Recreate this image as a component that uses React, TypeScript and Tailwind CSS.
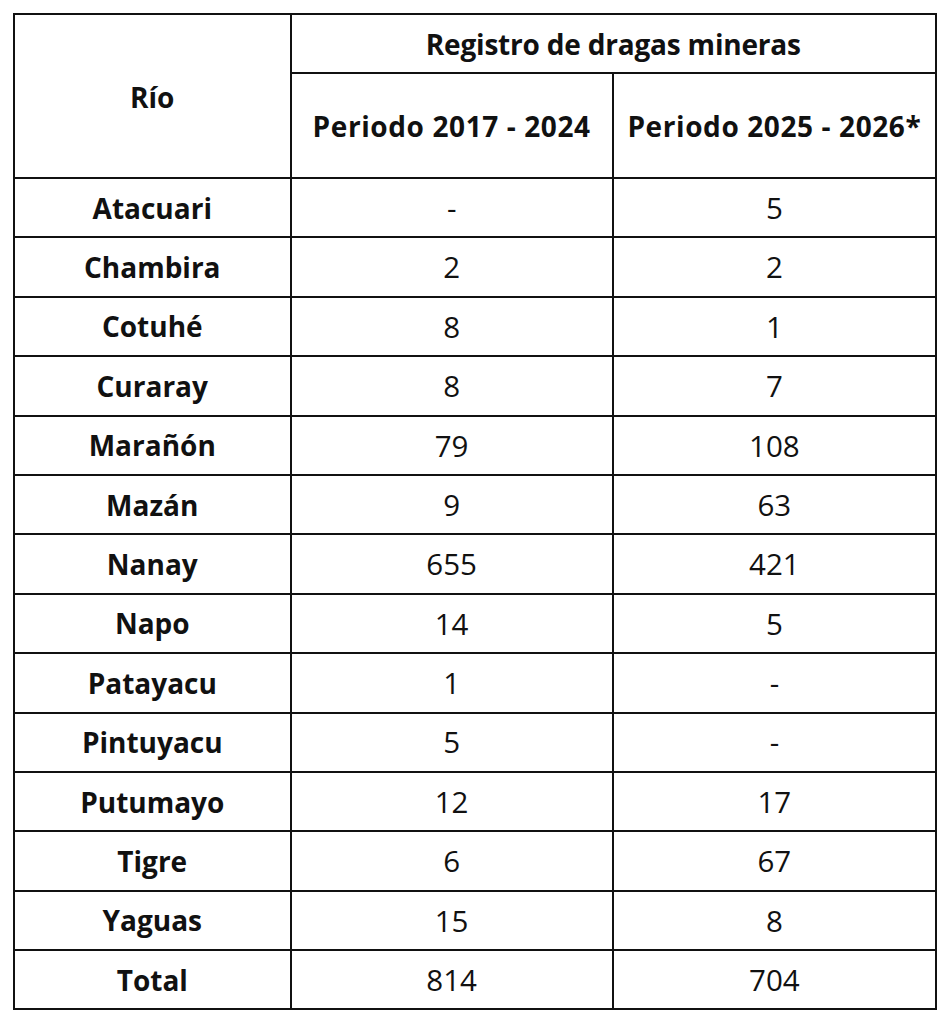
import React from "react";

const rows: [string, string, string][] = [
  ["Atacuari", "-", "5"],
  ["Chambira", "2", "2"],
  ["Cotuhé", "8", "1"],
  ["Curaray", "8", "7"],
  ["Marañón", "79", "108"],
  ["Mazán", "9", "63"],
  ["Nanay", "655", "421"],
  ["Napo", "14", "5"],
  ["Patayacu", "1", "-"],
  ["Pintuyacu", "5", "-"],
  ["Putumayo", "12", "17"],
  ["Tigre", "6", "67"],
  ["Yaguas", "15", "8"],
  ["Total", "814", "704"],
];

export default function App() {
  return (
    <div className="w-[951px] h-[1024px] bg-white pt-[13px] pl-[13px]" style={{ fontFamily: "'Open Sans', Lato, sans-serif" }}>
      <table className="border-collapse w-[924px] text-[28px] leading-none text-[#111]">
        <colgroup>
          <col className="w-[277px]" />
          <col className="w-[323px]" />
          <col className="w-[324px]" />
        </colgroup>
        <thead>
          <tr className="h-[59px]">
            <th rowSpan={2} className="border-2 border-[#111] font-bold text-center align-middle pt-[2px]">Río</th>
            <th colSpan={2} className="border-2 border-[#111] font-bold text-center align-middle tracking-[-0.2px]">Registro de dragas mineras</th>
          </tr>
          <tr className="h-[105px]">
            <th className="border-2 border-[#111] font-bold text-center align-middle pt-[1px] tracking-[0.6px]">Periodo 2017 - 2024</th>
            <th className="border-2 border-[#111] font-bold text-center align-middle pt-[1px] tracking-[0.6px]">Periodo 2025 - 2026*</th>
          </tr>
        </thead>
        <tbody>
          {rows.map(([r, a, b]) => (
            <tr key={r} className="h-[59.4px]">
              <td className="border-2 border-[#111] font-bold text-center align-middle">{r}</td>
              <td className="border-2 border-[#111] text-center align-middle text-[29.5px]">{a}</td>
              <td className="border-2 border-[#111] text-center align-middle text-[29.5px]">{b}</td>
            </tr>
          ))}
        </tbody>
      </table>
    </div>
  );
}
